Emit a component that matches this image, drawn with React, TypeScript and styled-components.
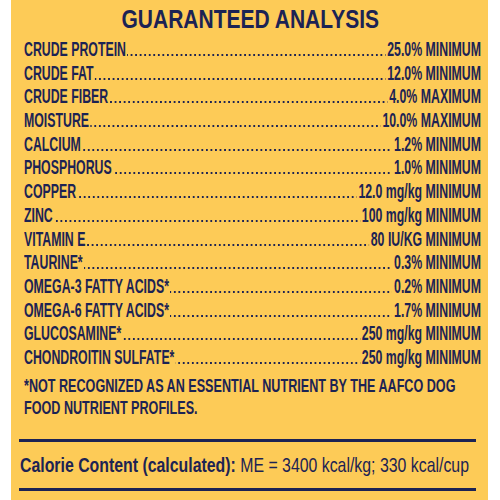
import React from "react";
import styled, { createGlobalStyle } from "styled-components";

const NAVY = "#1c2354";
const YELLOW = "#fdcb57";

const GlobalStyle = createGlobalStyle`
  html, body {
    margin: 0;
    padding: 0;
    background: #ffffff;
    overflow: hidden;
  }
  body {
    font-family: "Liberation Sans", Arial, sans-serif;
    color: ${NAVY};
  }
`;

const Page = styled.div`
  width: 500px;
  height: 500px;
  display: flex;
  justify-content: flex-start;
`;

const Panel = styled.section`
  margin-left: 11px;
  width: 477px;
  height: 500px;
  background: ${YELLOW};
  box-sizing: border-box;
  padding: 7px 7px 0 13px;
  overflow: hidden;
`;

const Title = styled.h1`
  margin: 0;
  height: 25px;
  font-size: 25px;
  line-height: 25px;
  font-weight: 700;
  text-align: center;
  white-space: nowrap;
  padding-right: 4px;
`;

const TitleText = styled.span`
  display: inline-block;
  transform: scaleX(0.84);
`;

// narrow block: laid out wide, then squeezed to fit
const Squeeze = styled.div<{ $s: number }>`
  width: calc(100% / ${(p) => p.$s});
  transform: scaleX(${(p) => p.$s});
  transform-origin: 0 0;
`;

const RowList = styled(Squeeze)`
  margin-top: 6px;
`;

const Row = styled.div`
  display: flex;
  align-items: baseline;
  height: 23.7px;
  line-height: 23.7px;
  font-size: 19.5px;
  font-weight: 700;
  white-space: nowrap;
`;

const Leader = styled.span`
  flex: 1;
  height: 2px;
  margin: 0 3px 0 2px;
  background-image: linear-gradient(
    to right,
    ${NAVY} 0,
    ${NAVY} 2.7px,
    transparent 2.7px
  );
  background-size: 7.2px 2px;
  background-repeat: repeat-x;
  background-position: right bottom;
`;

const Footnote = styled(Squeeze)`
  margin-top: 5.5px;
  font-size: 18px;
  line-height: 22px;
  font-weight: 700;
`;

const Rule = styled.hr`
  margin: 0 5px 0 -5px;
  border: 0;
  height: 3px;
  background: ${NAVY};
`;

const TopRule = styled(Rule)`
  margin-top: 19.5px;
`;

const Calorie = styled(Squeeze)`
  margin-left: -4px;
  font-size: 21px;
  line-height: 46px;
  height: 46px;
  white-space: nowrap;
`;

const Strong = styled.span`
  font-weight: 700;
`;

const rows: [string, string][] = [
  ["CRUDE PROTEIN", "25.0% MINIMUM"],
  ["CRUDE FAT", "12.0% MINIMUM"],
  ["CRUDE FIBER", "4.0% MAXIMUM"],
  ["MOISTURE", "10.0% MAXIMUM"],
  ["CALCIUM", "1.2% MINIMUM"],
  ["PHOSPHORUS", "1.0% MINIMUM"],
  ["COPPER", "12.0 mg/kg MINIMUM"],
  ["ZINC", "100 mg/kg MINIMUM"],
  ["VITAMIN E", "80 IU/KG MINIMUM"],
  ["TAURINE*", "0.3% MINIMUM"],
  ["OMEGA-3 FATTY ACIDS*", "0.2% MINIMUM"],
  ["OMEGA-6 FATTY ACIDS*", "1.7% MINIMUM"],
  ["GLUCOSAMINE*", "250 mg/kg MINIMUM"],
  ["CHONDROITIN SULFATE*", "250 mg/kg MINIMUM"],
];

export default function App() {
  return (
    <Page>
      <GlobalStyle />
      <Panel>
        <Title>
          <TitleText>GUARANTEED ANALYSIS</TitleText>
        </Title>
        <RowList $s={0.632}>
          {rows.map(([label, value]) => (
            <Row key={label}>
              <span>{label}</span>
              <Leader />
              <span>{value}</span>
            </Row>
          ))}
        </RowList>
        <Footnote $s={0.7}>
          *NOT RECOGNIZED AS AN ESSENTIAL NUTRIENT BY THE AAFCO DOG FOOD
          NUTRIENT PROFILES.
        </Footnote>
        <TopRule />
        <Calorie $s={0.755}>
          <Strong>Calorie Content (calculated):</Strong> ME = 3400 kcal/kg;
          330 kcal/cup
        </Calorie>
        <Rule />
      </Panel>
    </Page>
  );
}
